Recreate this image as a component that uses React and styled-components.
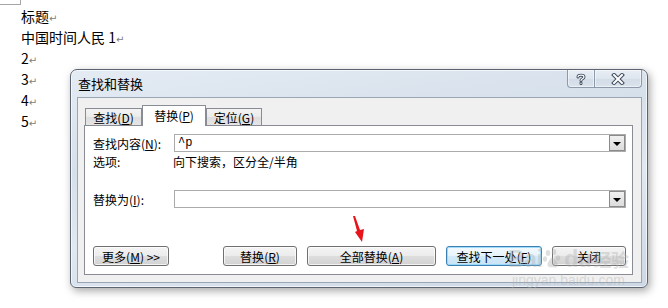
import React from 'react';
import styled, { createGlobalStyle } from 'styled-components';

const GlobalStyle = createGlobalStyle`
  html, body {
    margin: 0;
    padding: 0;
    background: #fff;
  }
  body {
    font-family: "Noto Sans CJK SC", "Noto Sans", sans-serif;
  }
`;

const Page = styled.div`
  position: relative;
  width: 668px;
  height: 308px;
  overflow: hidden;
  background: #fff;
`;

const CornerMark = styled.div`
  width: 20px;
  height: 4px;
  border-right: 1px solid #a6a6a6;
  border-bottom: 1px solid #a6a6a6;
`;

const Doc = styled.div`
  padding: 1px 0 0 21px;
  font-size: 14px;
  color: #000;
`;

const Para = styled.div`
  height: 21px;
  line-height: 21px;
  white-space: pre;
  overflow: visible;
`;

const Mark = styled.span`
  font-family: "DejaVu Sans", sans-serif;
  font-size: 10px;
  line-height: 0;
  color: #7d7d7d;
`;

const Dialog = styled.div`
  position: absolute;
  left: 70px;
  top: 69px;
  width: 578px;
  height: 219px;
  box-sizing: border-box;
  border: 1px solid #5b6470;
  border-radius: 7px 7px 6px 6px;
  padding: 0 5px 4px 6px;
  background: linear-gradient(172deg, #e4ebf3 0%, #d6e0eb 35%, #e0e8f1 60%, #cdd8e5 100%);
  box-shadow: 2px 3px 9px rgba(0, 0, 0, 0.35), inset 0 0 0 1px rgba(255, 255, 255, 0.65);
  display: flex;
  flex-direction: column;
  font-size: 12px;
  color: #000;
`;

const TitleBar = styled.div`
  height: 27px;
  display: flex;
  align-items: flex-start;
`;

const Title = styled.div`
  margin: 7px 0 0 1px;
  line-height: 14px;
  font-size: 13px;
`;

const Captions = styled.div`
  margin-left: auto;
  display: flex;
`;

const CaptionButton = styled.div`
  width: ${p => p.$w}px;
  height: 18px;
  box-sizing: border-box;
  border: 1px solid #8d9aab;
  border-top: none;
  border-left: ${p => (p.$first ? '1px solid #8d9aab' : 'none')};
  border-radius: ${p => (p.$first ? '0 0 0 4px' : '0 0 4px 0')};
  background: linear-gradient(#e9eef4, #dde5ee 50%, #d2dce7 51%, #dbe3ec);
  box-shadow: inset 0 0 0 1px rgba(255, 255, 255, 0.5);
  display: flex;
  align-items: center;
  justify-content: center;
`;

const Client = styled.div`
  flex: 1;
  border: 1px solid #9aa6b4;
  background: #f0f0f0;
  padding: 7px 8px 7px 6px;
  display: flex;
  flex-direction: column;
`;

const TabStrip = styled.div`
  height: 20px;
  padding-left: 1px;
  display: flex;
  align-items: flex-end;
  position: relative;
  z-index: 1;
`;

const Tab = styled.div`
  width: ${p => p.$w}px;
  height: ${p => (p.$active ? 21 : 17)}px;
  margin-bottom: ${p => (p.$active ? -1 : 0)}px;
  box-sizing: border-box;
  border: 1px solid #898c95;
  border-bottom: none;
  background: ${p => (p.$active ? '#fff' : 'linear-gradient(#f3f3f3, #ebebeb 50%, #dedede 51%, #e5e5e5)')};
  display: flex;
  align-items: center;
  justify-content: center;
  padding-bottom: ${p => (p.$active ? 2 : 0)}px;
  font-size: 12px;
`;

const Panel = styled.div`
  flex: 1;
  border: 1px solid #898c95;
  background: #fff;
  padding: 8px 6px 8px 8px;
  display: flex;
  flex-direction: column;
`;

const FieldRow = styled.div`
  display: grid;
  grid-template-columns: 81px 1fr;
  align-items: center;
  height: 18px;
  margin-top: ${p => p.$top || 0}px;
`;

const InfoRow = styled.div`
  display: grid;
  grid-template-columns: 80px 1fr;
  line-height: 16px;
  margin-top: 2px;
`;

const Combo = styled.div`
  height: 18px;
  box-sizing: border-box;
  border: 1px solid #ababab;
  background: #fff;
  display: flex;
  align-items: center;
  padding-left: 3px;
  font-family: "Liberation Mono", monospace;
  font-size: 12px;
`;

const DropButton = styled.div`
  margin-left: auto;
  width: 16px;
  height: 16px;
  box-sizing: border-box;
  border: 1px solid #8a8a8a;
  background: linear-gradient(#f0f0f0, #dcdcdc);
  display: flex;
  align-items: center;
  justify-content: center;
`;

const Caret = styled.div`
  width: 0;
  height: 0;
  border-left: 4px solid transparent;
  border-right: 4px solid transparent;
  border-top: 4px solid #000;
  margin-top: 1px;
`;

const ButtonRow = styled.div`
  margin-top: auto;
  display: flex;
  align-items: center;
`;

const RightGroup = styled.div`
  margin-left: auto;
  display: flex;
  gap: 10px;
`;

const Button = styled.div`
  width: ${p => p.$w}px;
  height: 20px;
  box-sizing: border-box;
  border: 1px solid ${p => (p.$focus ? '#3c7fb1' : '#707070')};
  border-radius: 3px;
  background: ${p =>
    p.$focus
      ? 'linear-gradient(#f4fafe, #e6f3fb 50%, #d3eaf8 51%, #c9e4f6)'
      : 'linear-gradient(#f4f4f4, #ececec 50%, #dedede 51%, #d2d2d2)'};
  box-shadow: inset 0 0 0 1px ${p => (p.$focus ? 'rgba(150,215,250,0.9)' : 'rgba(255,255,255,0.7)')};
  display: flex;
  align-items: center;
  justify-content: center;
  font-size: 12px;
  white-space: pre;
`;

const Arrow = styled.svg`
  position: absolute;
  left: 348px;
  top: 213px;
`;

const Watermark = styled.div`
  position: absolute;
  left: 508px;
  top: 246px;
  display: flex;
  flex-direction: column;
  color: rgba(175, 175, 175, 0.4);
  pointer-events: none;
`;

const WatermarkLogo = styled.div`
  display: flex;
  align-items: center;
  font-family: "Liberation Sans", sans-serif;
  font-weight: bold;
  font-size: 23px;
  line-height: 26px;
  letter-spacing: -0.5px;
`;

const WatermarkCjk = styled.span`
  font-family: "Noto Sans CJK SC", sans-serif;
  font-size: 18px;
  margin-left: 2px;
`;

const WatermarkUrl = styled.div`
  font-family: "Liberation Sans", sans-serif;
  font-size: 14px;
  line-height: 16px;
  margin-left: 4px;
`;

function Key({ children }) {
  return (
    <>
      (<u>{children}</u>)
    </>
  );
}

function HelpGlyph() {
  return (
    <svg width="10" height="12" viewBox="0 0 10 12">
      <path d="M2 4 C2 1.5 8 1.5 8 4 C8 5.8 5 5.8 5 7.5 M5 10 L5 10.5" fill="none" stroke="#3c4a5c" strokeWidth="3" strokeLinecap="round" />
      <path d="M2 4 C2 1.5 8 1.5 8 4 C8 5.8 5 5.8 5 7.5 M5 10 L5 10.5" fill="none" stroke="#fff" strokeWidth="1.2" strokeLinecap="round" />
    </svg>
  );
}

function CloseGlyph() {
  return (
    <svg width="14" height="12" viewBox="0 0 14 12">
      <path d="M3 2 L11 10 M11 2 L3 10" fill="none" stroke="#3c4a5c" strokeWidth="4" strokeLinecap="square" />
      <path d="M3 2 L11 10 M11 2 L3 10" fill="none" stroke="#fff" strokeWidth="2" strokeLinecap="square" />
    </svg>
  );
}

function Paw() {
  return (
    <svg width="22" height="22" viewBox="0 0 22 22" fill="currentColor">
      <ellipse cx="6" cy="5" rx="2.3" ry="3" />
      <ellipse cx="12" cy="4" rx="2.3" ry="3" />
      <ellipse cx="3" cy="11" rx="2.2" ry="2.8" />
      <ellipse cx="16" cy="10" rx="2.2" ry="2.8" />
      <path d="M9 10 C6 13 4 17 7 19 C9 20 11 18.5 13 19.5 C16 20 17 16 14 13 C12.5 11 11 9 9 10 Z" />
    </svg>
  );
}

export default function App() {
  const lines = ['标题', '中国时间人民 1', '2', '3', '4', '5'];

  return (
    <Page>
      <GlobalStyle />
      <CornerMark />
      <Doc>
        {lines.map(text => (
          <Para key={text}>
            {text}
            <Mark>↵</Mark>
          </Para>
        ))}
      </Doc>

      <Dialog>
        <TitleBar>
          <Title>查找和替换</Title>
          <Captions>
            <CaptionButton $w={28} $first>
              <HelpGlyph />
            </CaptionButton>
            <CaptionButton $w={47}>
              <CloseGlyph />
            </CaptionButton>
          </Captions>
        </TitleBar>

        <Client>
          <TabStrip>
            <Tab $w={57}>查找<Key>D</Key></Tab>
            <Tab $w={64} $active>替换<Key>P</Key></Tab>
            <Tab $w={56}>定位<Key>G</Key></Tab>
          </TabStrip>

          <Panel>
            <FieldRow>
              <span>查找内容<Key>N</Key>:</span>
              <Combo>
                ^p
                <DropButton>
                  <Caret />
                </DropButton>
              </Combo>
            </FieldRow>
            <InfoRow>
              <span>选项:</span>
              <span>向下搜索，区分全/半角</span>
            </InfoRow>
            <FieldRow $top={20}>
              <span>替换为<Key>I</Key>:</span>
              <Combo>
                <DropButton>
                  <Caret />
                </DropButton>
              </Combo>
            </FieldRow>

            <ButtonRow>
              <Button $w={76}>更多<Key>M</Key> &gt;&gt;</Button>
              <RightGroup>
                <Button $w={74}>替换<Key>R</Key></Button>
                <Button $w={129}>全部替换<Key>A</Key></Button>
                <Button $w={96} $focus>查找下一处<Key>F</Key></Button>
                <Button $w={74}>关闭</Button>
              </RightGroup>
            </ButtonRow>
          </Panel>
        </Client>
      </Dialog>

      <Arrow width="20" height="32" viewBox="0 0 20 32">
        <polygon points="5,3 7,3 12,17 16,16 14,29 7,19 9,18" fill="#e8141b" />
      </Arrow>

      <Watermark>
        <WatermarkLogo>
          Bai
          <Paw />
          du
          <WatermarkCjk>经验</WatermarkCjk>
        </WatermarkLogo>
        <WatermarkUrl>jingyan.baidu.com</WatermarkUrl>
      </Watermark>
    </Page>
  );
}
